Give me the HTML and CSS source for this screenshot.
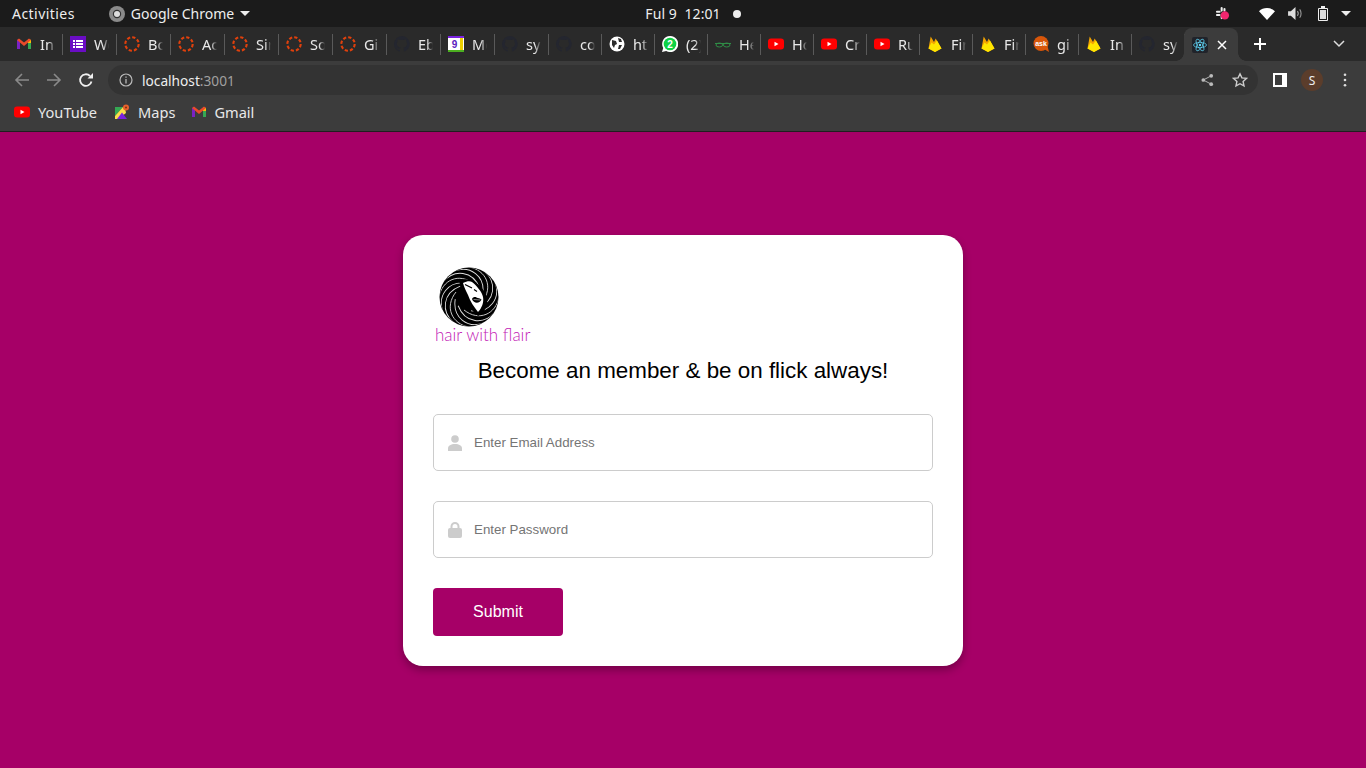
FILE: index.html
```html
<!DOCTYPE html>
<html>

<head>
	<title>Hair with flair</title>
	<link rel="stylesheet" href="styles.css">
</head>

<body>
	<svg class="defs" width="0" height="0">
		<symbol id="ring" viewBox="0 0 16 16"><circle cx="8" cy="8" r="6.700" fill="none" stroke="#e0400c" stroke-width="2.100" stroke-dasharray="3.260 2"/></symbol>
		<symbol id="github" viewBox="0 0 16 16"><path fill="#24262f" d="M8 0a8 8 0 0 0-2.500 15.600c.4.100.5-.2.5-.4v-1.400c-2.200.5-2.700-1-2.700-1-.4-.9-.9-1.200-.9-1.200-.7-.5 0-.5 0-.5.8.1 1.200.8 1.200.8.7 1.200 1.900.9 2.300.7.1-.5.300-.9.500-1.100-1.800-.2-3.600-.9-3.600-4 0-.9.300-1.600.8-2.100-.1-.2-.4-1 .1-2.100 0 0 .7-.2 2.200.8a7.600 7.600 0 0 1 4 0c1.500-1 2.200-.8 2.200-.8.4 1.100.2 1.900.1 2.100.5.600.8 1.300.8 2.100 0 3.100-1.900 3.700-3.700 3.900.3.300.6.800.6 1.500v2.200c0 .2.100.5.600.4A8 8 0 0 0 8 0z"/></symbol>
		<symbol id="gmail" viewBox="0 0 16 16"><path fill="#7a22c4" d="M1 4l3-1v10H1z"/><path fill="#35a853" d="M12 3l3 1v9h-3z"/><path fill="#fbbc05" d="M12 3l3 1v3l-3 0z"/><path fill="#ea4a2a" d="M1 4l2-1.500L8 6.500l5-4L15 4 8 10z"/></symbol>
		<symbol id="yt" viewBox="0 0 16 16"><rect x="0" y="2.500" width="16" height="11" rx="3" fill="#f00"/><path fill="#fff" d="M6.500 5.800 10.500 8l-4 2.200z"/></symbol>
		<symbol id="fire" viewBox="0 0 16 16"><path fill="#f4a400" d="M1.500 12.500 3.700.5 7 6l1.700-3.500 5.800 10L8 16z"/><path fill="#ffe600" d="M1.500 12.500 4.500 6.500 7 8.500l3-4 4.500 8L8 16z"/></symbol>
	</svg>

	<div class="topbar">
		<div class="topbar_left">
			<span class="activities">Activities</span>
			<span class="app_name">
				<svg class="app_icon" viewBox="0 0 16 16"><circle cx="8" cy="8" r="8" fill="#8b8b8b"/><circle cx="8" cy="8" r="4.200" fill="#333"/><circle cx="8" cy="8" r="3" fill="#ddd"/></svg>
				Google Chrome
				<span class="caret"></span>
			</span>
		</div>
		<div class="clock">Ful 9&nbsp; 12:01<span class="clock_dot"></span></div>
		<div class="tray">
			<svg class="tray_slack" viewBox="0 0 16 16"><g fill="#eee"><rect x="1" y="5" width="5" height="2.200" rx="1.100"/><rect x="6" y="1" width="2.200" height="5" rx="1.100"/><rect x="9" y="2" width="2.200" height="4" rx="1.100"/><rect x="1" y="8.500" width="5" height="2.200" rx="1.100"/><rect x="6" y="10" width="2.200" height="4" rx="1.100"/></g><circle cx="10.500" cy="10" r="4.500" fill="#f0266f"/></svg>
			<svg class="tray_wifi" viewBox="0 0 16 12"><path fill="#fff" d="M0 3.200C2 1.200 5 0 8 0s6 1.200 8 3.200L8 12z"/></svg>
			<svg class="tray_vol" viewBox="0 0 16 14"><path fill="#ddd" d="M0 4.500h3L8 0v14L3 9.500H0z"/><path fill="none" stroke="#999" stroke-width="1.200" d="M10 4.500c1.200 1.500 1.200 3.500 0 5M12.500 2.500c2 2.500 2 6.500 0 9"/></svg>
			<svg class="tray_batt" viewBox="0 0 10 15"><path fill="none" stroke="#eee" d="M.5 2.500h9v12h-9z"/><rect x="3" y="0" width="4" height="2" fill="#eee"/><rect x="2" y="4" width="6" height="9" fill="#ddd"/></svg>
			<span class="caret"></span>
		</div>
	</div>

	<div class="tabstrip">
		<div class="tab"><svg class="fav"><use href="#gmail"/></svg><span class="tab_text">Inbox</span></div>
		<div class="tab"><svg class="fav" viewBox="0 0 16 16"><rect width="16" height="16" fill="#6a0dc4"/><path fill="#fff" d="M3 4h2v2H3zM6 4h7v2H6zM3 7h2v2H3zM6 7h7v2H6zM3 10h2v2H3zM6 10h7v2H6z"/></svg><span class="tab_text">Wo</span></div>
		<div class="tab"><svg class="fav"><use href="#ring"/></svg><span class="tab_text">Bo</span></div>
		<div class="tab"><svg class="fav"><use href="#ring"/></svg><span class="tab_text">Ac</span></div>
		<div class="tab"><svg class="fav"><use href="#ring"/></svg><span class="tab_text">Sir</span></div>
		<div class="tab"><svg class="fav"><use href="#ring"/></svg><span class="tab_text">So</span></div>
		<div class="tab"><svg class="fav"><use href="#ring"/></svg><span class="tab_text">Gi</span></div>
		<div class="tab"><svg class="fav"><use href="#github"/></svg><span class="tab_text">Eb</span></div>
		<div class="tab"><svg class="fav" viewBox="0 0 16 16"><rect width="16" height="16" fill="#fff"/><path fill="#7a22e0" d="M0 0h16v2H0z"/><path fill="#4caf20" d="M0 14h16v2H0z"/><path fill="#ecd000" d="M12 2h3v12h-3z"/><text x="6.500" y="12" class="fav_nine">9</text></svg><span class="tab_text">Me</span></div>
		<div class="tab"><svg class="fav"><use href="#github"/></svg><span class="tab_text">sy</span></div>
		<div class="tab"><svg class="fav"><use href="#github"/></svg><span class="tab_text">co</span></div>
		<div class="tab"><svg class="fav" viewBox="0 0 16 16"><circle cx="8" cy="8" r="7.500" fill="#fff"/><path fill="#2b2b2b" d="M3 4l4 1 1 3-2 1-1 3-2-3zM9 2l3 1 1 3-3 0zM10 9l3 0-2 4-2 0z"/></svg><span class="tab_text">ht</span></div>
		<div class="tab"><svg class="fav" viewBox="0 0 16 16"><path fill="#fff" d="M8 0a8 8 0 0 0-6.800 12L0 16l4.200-1.100A8 8 0 1 0 8 0z"/><circle cx="8" cy="8" r="6.300" fill="#0ed145"/><text x="8" y="11.500" class="fav_two">2</text></svg><span class="tab_text">(2)</span></div>
		<div class="tab"><svg class="fav" viewBox="0 0 16 16"><g fill="none" stroke="#2f8d46" stroke-width="1"><path d="M0 7.500h16"/><ellipse cx="4.300" cy="9" rx="3.300" ry="2"/><ellipse cx="11.700" cy="9" rx="3.300" ry="2"/></g></svg><span class="tab_text">He</span></div>
		<div class="tab"><svg class="fav"><use href="#yt"/></svg><span class="tab_text">Ho</span></div>
		<div class="tab"><svg class="fav"><use href="#yt"/></svg><span class="tab_text">Cr</span></div>
		<div class="tab"><svg class="fav"><use href="#yt"/></svg><span class="tab_text">Ru</span></div>
		<div class="tab"><svg class="fav"><use href="#fire"/></svg><span class="tab_text">Fir</span></div>
		<div class="tab"><svg class="fav"><use href="#fire"/></svg><span class="tab_text">Fir</span></div>
		<div class="tab"><svg class="fav" viewBox="0 0 16 16"><circle cx="8" cy="7.500" r="7.500" fill="#d8560a"/><path fill="#d8560a" d="M11 13l5 3-1.500-6z"/><text x="8" y="10" class="fav_ask">ask</text></svg><span class="tab_text">gi</span></div>
		<div class="tab"><svg class="fav"><use href="#fire"/></svg><span class="tab_text">In</span></div>
		<div class="tab"><svg class="fav"><use href="#github"/></svg><span class="tab_text">sy</span></div>
		<div class="tab tab_active">
			<svg class="fav" viewBox="0 0 16 16"><rect width="16" height="16" rx="2" fill="#20232a"/><g fill="none" stroke="#61dafb" stroke-width=".7"><ellipse cx="8" cy="8" rx="6.500" ry="2.600"/><ellipse cx="8" cy="8" rx="6.500" ry="2.600" transform="rotate(60 8 8)"/><ellipse cx="8" cy="8" rx="6.500" ry="2.600" transform="rotate(120 8 8)"/></g><circle cx="8" cy="8" r="1.200" fill="#61dafb"/></svg>
			<svg class="tab_close" viewBox="0 0 10 10"><path stroke="#fff" stroke-width="1.500" d="M1 1l8 8M9 1l-8 8"/></svg>
		</div>
		<svg class="new_tab" viewBox="0 0 12 12"><path stroke="#fff" stroke-width="2" d="M6 0v12M0 6h12"/></svg>
		<svg class="tab_menu" viewBox="0 0 12 8"><path fill="none" stroke="#ddd" stroke-width="1.500" d="M1 1l5 5 5-5"/></svg>
	</div>

	<div class="toolbar">
		<svg class="nav_icon" viewBox="0 0 16 16"><path fill="none" stroke="#8a8a8a" stroke-width="1.600" d="M15 8H2M8 2 2 8l6 6"/></svg>
		<svg class="nav_icon" viewBox="0 0 16 16"><path fill="none" stroke="#8a8a8a" stroke-width="1.600" d="M1 8h13M8 2l6 6-6 6"/></svg>
		<svg class="nav_icon reload" viewBox="0 0 16 16"><path fill="none" stroke="#f0f0f0" stroke-width="1.800" d="M13.500 9.500A5.800 5.800 0 1 1 12 4"/><path fill="#f0f0f0" d="M9.500 6.500H15V1z"/></svg>
		<div class="omnibox">
			<svg class="info_icon" viewBox="0 0 14 14"><circle cx="7" cy="7" r="6" fill="none" stroke="#bbb" stroke-width="1.200"/><path stroke="#bbb" stroke-width="1.300" d="M7 6v4.500M7 3.500v1.300"/></svg>
			<span class="url">localhost<span class="url_port">:3001</span></span>
			<svg class="omni_share" viewBox="0 0 14 14"><g fill="#bbb"><circle cx="11" cy="2.500" r="2"/><circle cx="2.500" cy="7" r="2"/><circle cx="11" cy="11.500" r="2"/></g><path stroke="#bbb" fill="none" d="M11 2.500 2.500 7l8.500 4.500"/></svg>
			<svg class="omni_star" viewBox="0 0 16 16"><path fill="none" stroke="#ccc" stroke-width="1.400" d="M8 1.800l1.900 4.100 4.500.5-3.300 3 .9 4.500L8 11.700l-4 2.200.9-4.500-3.300-3 4.500-.5z"/></svg>
		</div>
		<svg class="panel_icon" viewBox="0 0 14 14"><path fill="#fff" d="M0 0h14v14H0z"/><path fill="#3c3c3c" d="M2 2h7v10H2z"/></svg>
		<div class="avatar">S</div>
		<svg class="dots" viewBox="0 0 4 16"><g fill="#ddd"><circle cx="2" cy="2" r="1.500"/><circle cx="2" cy="8" r="1.500"/><circle cx="2" cy="14" r="1.500"/></g></svg>
	</div>

	<div class="bookmarks">
		<div class="bookmark"><svg class="fav"><use href="#yt"/></svg>YouTube</div>
		<div class="bookmark"><svg class="fav" viewBox="0 0 16 16"><path fill="#35a853" d="M1 3h8L1 12z"/><path fill="#fbe04a" d="M1 12 9 3l2 1 1 5-8 6H1z"/><path fill="#7a22e0" d="M3 15 8 8.500 13 15z"/><circle cx="12" cy="3.500" r="3" fill="#e8612c"/><circle cx="12" cy="3.500" r="1" fill="#7a3010"/></svg>Maps</div>
		<div class="bookmark"><svg class="fav"><use href="#gmail"/></svg>Gmail</div>
	</div>

	<main class="page">
		<form class="card">
			<div class="logo">
				<svg class="logo_mark" viewBox="0 0 60 60">
					<defs>
						<clipPath id="logo_clip"><circle cx="30" cy="30" r="29"/></clipPath>
						<path id="strand" d="M30 0C47 3 55 20 43 35"/>
					</defs>
					<circle cx="30" cy="30" r="29.500" fill="#000"/>
					<g clip-path="url(#logo_clip)" fill="none" stroke="#ddd" stroke-width=".9">
						<use href="#strand"/>
						<use href="#strand" transform="rotate(30 30 30)"/>
						<use href="#strand" transform="rotate(60 30 30)"/>
						<use href="#strand" transform="rotate(90 30 30)"/>
						<use href="#strand" transform="rotate(120 30 30)"/>
						<use href="#strand" transform="rotate(150 30 30)"/>
						<use href="#strand" transform="rotate(180 30 30)"/>
						<use href="#strand" transform="rotate(210 30 30)"/>
						<use href="#strand" transform="rotate(240 30 30)"/>
						<use href="#strand" transform="rotate(270 30 30)"/>
						<use href="#strand" transform="rotate(300 30 30)"/>
						<use href="#strand" transform="rotate(330 30 30)"/>
					</g>
					<path fill="#000" d="M20 14C30 8 44 18 48 30C49 38 46 46 39 49C32 44 25 32 20 14z"/>
					<path fill="#fff" d="M24 16C28 14 31 14 33 15C38 19 43 25 44 30C45 35 43 41 39 45C35 40 31 34 29 28C27 24 25 20 24 16z"/>
					<path fill="none" stroke="#000" stroke-width="1.200" d="M26 17.500l7 3.500M35 22.500l3 2"/>
					<path fill="#000" d="M33 32c1-2 3-2.500 4.500-1.500s3.500.5 5 2c-1 3.500-7.500 5-9.500-.5z"/>
					<path fill="none" stroke="#fff" stroke-width=".5" d="M34.500 32.500l7 .5"/>
				</svg>
				<div class="logo_text">hair with flair</div>
			</div>
			<h2 class="title">Become an member &amp; be on flick always!</h2>
			<div class="field">
				<svg class="field_icon" viewBox="0 0 14 16"><circle cx="7" cy="4" r="3.800" fill="#ccc"/><path fill="#ccc" d="M0 16v-2.500C0 10.500 3 9 7 9s7 1.500 7 4.500V16z"/></svg>
				<input class="field_input" type="text" placeholder="Enter Email Address">
			</div>
			<div class="field">
				<svg class="field_icon" viewBox="0 0 14 16"><path fill="none" stroke="#ccc" stroke-width="2" d="M3.500 7V4.500a3.500 3.500 0 0 1 7 0V7"/><rect y="6" width="14" height="10" rx="2" fill="#ccc"/></svg>
				<input class="field_input" type="password" placeholder="Enter Password">
			</div>
			<button class="submit" type="button">Submit</button>
		</form>
	</main>
</body>

</html>
```

FILE: styles.css
```css
html, body {
	margin: 0;
	height: 100%;
}

body {
	display: flex;
	flex-direction: column;
	height: 768px;
	overflow: hidden;
	font-family: "Noto Sans", sans-serif;
	background: #a60067;
}

.defs {
	position: absolute;
}

/* ubuntu top bar */
.topbar {
	height: 27px;
	flex: none;
	display: grid;
	grid-template-columns: 1fr auto 1fr;
	align-items: center;
	background: #1b1b1b;
	color: #eee;
	font-size: 14px;
}

.topbar_left {
	display: flex;
	align-items: center;
	padding-left: 12px;
	gap: 34px;
}

.activities {
	letter-spacing: 0.45px;
}

.app_name {
	display: flex;
	align-items: center;
	gap: 6px;
}

.app_icon {
	width: 16px;
	height: 16px;
}

.caret {
	width: 0;
	height: 0;
	border-left: 5px solid transparent;
	border-right: 5px solid transparent;
	border-top: 5px solid #eee;
}

.clock {
	display: flex;
	align-items: center;
	margin-left: 20px;
	font-size: 14px;
	letter-spacing: 0.1px;
}

.clock_dot {
	width: 8px;
	height: 8px;
	margin-left: 12px;
	border-radius: 50%;
	background: #eee;
}

.tray {
	display: flex;
	align-items: center;
	justify-content: flex-end;
	padding-right: 15px;
}

.tray_slack {
	width: 15px;
	height: 15px;
	margin-right: 29px;
}

.tray_wifi {
	width: 16px;
	height: 12px;
	margin-right: 13px;
}

.tray_vol {
	width: 15px;
	height: 13px;
	margin-right: 15px;
}

.tray_batt {
	width: 10px;
	height: 15px;
	margin-right: 13px;
}

/* tabs */
.tabstrip {
	height: 34px;
	flex: none;
	display: flex;
	align-items: center;
	padding-left: 9px;
	background: #2a2a2a;
	color: #e8e8e8;
	font-size: 14.500px;
}

.tab {
	width: 53px;
	height: 21px;
	flex: none;
	display: flex;
	align-items: center;
	padding-left: 7px;
	box-sizing: border-box;
	gap: 8px;
	border-right: 1px solid #5a5a5a;
}

.tab:nth-child(-n+10) {
	width: 54px;
}

.fav {
	width: 16px;
	height: 16px;
	flex: none;
}

/* titles fade out at the tab edge, like chrome does */
.tab_text {
	width: 15px;
	white-space: nowrap;
	-webkit-mask-image: linear-gradient(to right, #000 60%, transparent);
	mask-image: linear-gradient(to right, #000 60%, transparent);
}

.fav_nine {
	font: bold 10px "Liberation Sans", sans-serif;
	fill: #5a20c0;
	text-anchor: middle;
}

.fav_two {
	font: bold 10px "Liberation Sans", sans-serif;
	fill: #fff;
	text-anchor: middle;
}

.fav_ask {
	font: bold 7px "Liberation Sans", sans-serif;
	fill: #fff;
	text-anchor: middle;
}

.tab_active {
	position: relative;
	width: 54px;
	height: 33px;
	align-self: flex-end;
	margin-left: -1px;
	justify-content: space-between;
	padding: 0 11px 0 8px;
	border: none;
	border-radius: 8px 8px 0 0;
	background: #3c3c3c;
}

.tab_active::before,
.tab_active::after {
	content: "";
	position: absolute;
	bottom: 0;
	width: 8px;
	height: 8px;
}

.tab_active::before {
	left: -8px;
	background: radial-gradient(circle at 0 0, #2a2a2a 7.500px, #3c3c3c 8px);
}

.tab_active::after {
	right: -8px;
	background: radial-gradient(circle at 100% 0, #2a2a2a 7.500px, #3c3c3c 8px);
}

.tab_close {
	width: 10px;
	height: 10px;
}

.new_tab {
	width: 12px;
	height: 12px;
	margin-left: 16px;
}

.tab_menu {
	width: 12px;
	height: 8px;
	margin-left: 67px;
}

/* address bar */
.toolbar {
	height: 38px;
	flex: none;
	display: flex;
	align-items: center;
	padding-left: 14px;
	background: #3c3c3c;
}

.nav_icon {
	width: 16px;
	height: 16px;
	margin-right: 16px;
}

.reload {
	margin-right: 14px;
}

.omnibox {
	width: 1150px;
	height: 30px;
	display: flex;
	align-items: center;
	padding: 0 10px 0 11px;
	box-sizing: border-box;
	border-radius: 15px;
	background: #333;
	color: #eee;
	font-size: 13.700px;
}

.info_icon {
	width: 14px;
	height: 14px;
	margin-right: 9px;
}

.url {
	flex: 1;
}

.url_port {
	color: #a0a0a0;
}

.omni_share {
	width: 13px;
	height: 14px;
	margin-right: 18px;
}

.omni_star {
	width: 16px;
	height: 16px;
}

.panel_icon {
	width: 14px;
	height: 14px;
	margin-left: 15px;
}

.avatar {
	width: 22px;
	height: 22px;
	margin-left: 14px;
	display: flex;
	align-items: center;
	justify-content: center;
	border-radius: 50%;
	background: #5b3d2b;
	color: #eee;
	font-size: 12px;
}

.dots {
	width: 4px;
	height: 14px;
	margin-left: 20px;
}

/* bookmarks */
.bookmarks {
	height: 33px;
	flex: none;
	display: flex;
	align-items: center;
	gap: 17px;
	padding: 0 0 6px 14px;
	box-sizing: border-box;
	background: #3c3c3c;
	border-bottom: 1px solid #1f1f1f;
	color: #e8e8e8;
	font-size: 14.600px;
}

.bookmark {
	display: flex;
	align-items: center;
	gap: 8px;
}

.bookmark:last-child {
	margin-left: -1px;
	gap: 7px;
}

/* page */
.page {
	flex: 1;
	display: flex;
	justify-content: center;
	padding-top: 103px;
	box-sizing: border-box;
	font-family: "Liberation Sans", sans-serif;
}

.card {
	width: 560px;
	height: 431px;
	padding: 30px;
	box-sizing: border-box;
	border-radius: 20px;
	background: #fff;
	box-shadow: 0 4px 8px rgba(0, 0, 0, 0.3);
}

.logo {
	width: 100px;
	margin-left: 2px;
}

.logo_mark {
	display: block;
	width: 60px;
	height: 60px;
	margin-left: 4px;
	margin-top: 2px;
}

.logo_text {
	margin-top: -2px;
	font-family: "Lato", sans-serif;
	font-weight: 300;
	font-size: 17px;
	line-height: 20px;
	color: #c21ab5;
	white-space: nowrap;
}

.title {
	margin: 13px 0 30px;
	text-align: center;
	font-size: 22.400px;
	line-height: 26px;
	font-weight: normal;
	color: #000;
}

.field {
	height: 57px;
	display: flex;
	align-items: center;
	gap: 12px;
	padding-left: 14px;
	margin-bottom: 30px;
	box-sizing: border-box;
	border: 1px solid #ccc;
	border-radius: 5px;
}

.field_icon {
	width: 14px;
	height: 16px;
	flex: none;
}

.field_input {
	flex: 1;
	border: none;
	outline: none;
	padding: 0;
	background: transparent;
	font-family: "Liberation Sans", sans-serif;
	font-size: 13.333px;
}

.submit {
	display: block;
	width: 130px;
	height: 48px;
	border: none;
	border-radius: 4px;
	background: #a60067;
	color: #fff;
	font-family: "Liberation Sans", sans-serif;
	font-size: 16px;
}
```
